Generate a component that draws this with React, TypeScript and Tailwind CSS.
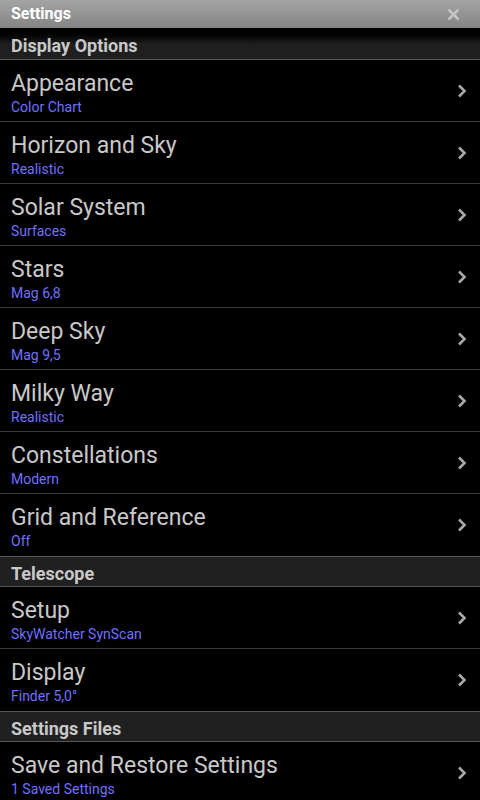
import { X } from 'lucide-react';

type Item = { title: string; value: string };
type Section = { name: string; items: Item[] };

const sections: Section[] = [
  {
    name: 'Display Options',
    items: [
      { title: 'Appearance', value: 'Color Chart' },
      { title: 'Horizon and Sky', value: 'Realistic' },
      { title: 'Solar System', value: 'Surfaces' },
      { title: 'Stars', value: 'Mag 6,8' },
      { title: 'Deep Sky', value: 'Mag 9,5' },
      { title: 'Milky Way', value: 'Realistic' },
      { title: 'Constellations', value: 'Modern' },
      { title: 'Grid and Reference', value: 'Off' },
    ],
  },
  {
    name: 'Telescope',
    items: [
      { title: 'Setup', value: 'SkyWatcher SynScan' },
      { title: 'Display', value: 'Finder 5,0°' },
    ],
  },
  {
    name: 'Settings Files',
    items: [{ title: 'Save and Restore Settings', value: '1 Saved Settings' }],
  },
];

function Chevron() {
  return (
    <svg width="12" height="16" viewBox="0 0 12 16" className="shrink-0">
      <path d="M3 2.5 L8.5 8 L3 13.5" fill="none" stroke="#a8a8a8" strokeWidth="2.6" />
    </svg>
  );
}

function Row({ item, last }: { item: Item; last: boolean }) {
  return (
    <div className={`h-[62px] flex items-center pl-[11px] pr-[12px] ${last ? '' : 'border-b border-[#3a3a3a]'}`}>
      <div className="flex-1 min-w-0 pt-[5px]">
        <div className="text-[23px] leading-[28px] text-[#c8c8c8]">{item.title}</div>
        <div className="text-[14px] leading-[19px] text-[#7070ff]">{item.value}</div>
      </div>
      <Chevron />
    </div>
  );
}

export default function App() {
  return (
    <div className="w-[480px] h-[800px] overflow-hidden bg-black font-['Roboto','Liberation_Sans',sans-serif]">
      {/* Title bar */}
      <div className="h-[28px] flex items-center justify-between pl-[11px] pr-[18px] bg-gradient-to-b from-[#a4a4a4] to-[#848484]">
        <span className="text-white font-bold text-[16px]">Settings</span>
        <X size={17} strokeWidth={3.5} className="text-[#c4c4c4]" />
      </div>

      {sections.map((s, si) => (
        <div key={s.name}>
          <div
            className={`flex items-center pl-[11px] border-b border-[#555] bg-[#202020] ${
              si === 0
                ? 'h-[32px] bg-gradient-to-b from-black via-[#1e1e1e] to-[#202020]'
                : 'h-[31px] border-t'
            }`}
          >
            <span className="text-[18px] font-bold text-[#c9c9c9] pt-[3px]">{s.name}</span>
          </div>
          {s.items.map((it, i) => (
            <Row key={it.title} item={it} last={i === s.items.length - 1} />
          ))}
        </div>
      ))}
    </div>
  );
}
